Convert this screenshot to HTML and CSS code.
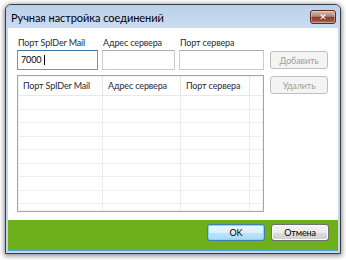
FILE: index.html
```html
<!DOCTYPE html>
<html>
<head>
<meta charset="utf-8">
<link rel="stylesheet" href="styles.css">
</head>
<body>
<div class="window">
  <div class="titlebar">
    <span class="title">Ручная настройка соединений</span>
    <div class="close"><span>✕</span></div>
  </div>
  <div class="client">
    <div class="content">
      <div class="left">
        <div class="fields">
          <div class="field f1">
            <div class="label">Порт SpIDer Mail</div>
            <div class="input focused">7000<span class="caret"></span></div>
          </div>
          <div class="field f2">
            <div class="label">Адрес сервера</div>
            <div class="input"></div>
          </div>
          <div class="field f3">
            <div class="label">Порт сервера</div>
            <div class="input"></div>
          </div>
        </div>
        <div class="table">
          <div class="row head">
            <div class="cell c1">Порт SpIDer Mail</div>
            <div class="cell c2">Адрес сервера</div>
            <div class="cell c3">Порт сервера</div>
            <div class="cell c4"></div>
          </div>
          <div class="row"><div class="cell c1"></div><div class="cell c2"></div><div class="cell c3"></div><div class="cell c4"></div></div>
          <div class="row"><div class="cell c1"></div><div class="cell c2"></div><div class="cell c3"></div><div class="cell c4"></div></div>
          <div class="row"><div class="cell c1"></div><div class="cell c2"></div><div class="cell c3"></div><div class="cell c4"></div></div>
          <div class="row"><div class="cell c1"></div><div class="cell c2"></div><div class="cell c3"></div><div class="cell c4"></div></div>
          <div class="row"><div class="cell c1"></div><div class="cell c2"></div><div class="cell c3"></div><div class="cell c4"></div></div>
          <div class="row"><div class="cell c1"></div><div class="cell c2"></div><div class="cell c3"></div><div class="cell c4"></div></div>
          <div class="row"><div class="cell c1"></div><div class="cell c2"></div><div class="cell c3"></div><div class="cell c4"></div></div>
          <div class="row"><div class="cell c1"></div><div class="cell c2"></div><div class="cell c3"></div><div class="cell c4"></div></div>
          <div class="row"><div class="cell c1"></div><div class="cell c2"></div><div class="cell c3"></div><div class="cell c4"></div></div>
        </div>
      </div>
      <div class="side">
        <div class="btn disabled add">Добавить</div>
        <div class="btn disabled del">Удалить</div>
      </div>
    </div>
    <div class="footer">
      <div class="btn ok">OK</div>
      <div class="btn cancel">Отмена</div>
    </div>
  </div>
</div>
</body>
</html>
```
FILE: styles.css
```css
html, body {
  margin: 0;
  padding: 0;
  background: #ffffff;
}
body {
  font-family: Lato, "Noto Sans", sans-serif;
  font-size: 9px;
  letter-spacing: -0.15px;
  width: 346px;
  height: 260px;
  overflow: hidden;
}
.window {
  box-sizing: border-box;
  margin: 4px 0 0 5px;
  width: 336px;
  height: 250px;
  border: 1px solid #3a3d42;
  border-radius: 6px 6px 0 0;
  background: #c3d6ec;
  box-shadow: 0 1px 5px 1px rgba(0, 0, 0, 0.45);
  display: flex;
  flex-direction: column;
  overflow: hidden;
}
.titlebar {
  height: 23px;
  flex: none;
  display: flex;
  align-items: center;
  justify-content: space-between;
  padding: 0 4px 0 5px;
  background: linear-gradient(#bad1ea, #cadcf1);
}
.title {
  font-size: 11px;
  letter-spacing: -0.05px;
  color: #000;
  margin-top: 1px;
}
.close {
  width: 26px;
  height: 14px;
  margin-top: 1px;
  box-sizing: border-box;
  border: 1px solid #5a2a20;
  border-radius: 3px;
  background: linear-gradient(#d9b8ad 0%, #b88271 45%, #8a3b29 50%, #9c4f3c 80%, #b97a66 100%);
  box-shadow: inset 0 0 0 1px rgba(255, 255, 255, 0.35);
  display: flex;
  align-items: center;
  justify-content: center;
}
.close span {
  color: #fff;
  font-size: 9px;
  font-weight: bold;
  line-height: 1;
  letter-spacing: 0;
  font-family: "DejaVu Sans", sans-serif;
}
.client {
  margin: 0 2px 2px 2px;
  flex: 1;
  background: #fff;
  display: flex;
  flex-direction: column;
  border-bottom: 1px solid #4aa3df;
}
.content {
  flex: 1;
  display: flex;
  padding: 8px 0 0 9px;
  gap: 5px;
}
.left {
  width: 248px;
  display: flex;
  flex-direction: column;
}
.fields {
  display: flex;
}
.field {
  display: flex;
  flex-direction: column;
}
.f1 { width: 81px; margin-right: 4px; }
.f2 { width: 73px; margin-right: 4px; }
.f3 { width: 85px; }
.label {
  height: 13px;
  line-height: 13px;
  padding-left: 1px;
  margin-bottom: 1px;
  color: #1e2b3c;
  white-space: nowrap;
}
.input {
  box-sizing: border-box;
  height: 20px;
  border: 1px solid #c8ccd2;
  border-top-color: #abadb3;
  background: #fff;
  line-height: 18px;
  padding-left: 3px;
  color: #000;
}
.input.focused {
  border-color: #5d9bd3;
  border-top-color: #3d7bad;
}
.caret {
  display: inline-block;
  width: 1px;
  height: 10px;
  margin-left: 3px;
  background: #000;
  vertical-align: -2px;
}
.table {
  margin-top: 5px;
  box-sizing: border-box;
  height: 137px;
  border: 1px solid #a3a6ac;
  box-shadow: inset 0 0 0 1px #f2f2f2;
  overflow: hidden;
  width: 247px;
}
.row {
  display: flex;
  box-sizing: border-box;
  height: 13.5px;
  border-bottom: 1px solid #eeeeee;
}
.row.head {
  height: 20px;
  border-bottom: 1px solid #e8e8e8;
}
.cell {
  box-sizing: border-box;
  border-right: 1px solid #ececec;
  height: 100%;
  white-space: nowrap;
  color: #1e2b3c;
}
.head .cell {
  line-height: 19px;
  padding-left: 5px;
  border-right-color: #e3e3e3;
}
.c1 { width: 85px; }
.c2 { width: 78px; }
.c3 { width: 69px; }
.c4 { flex: 1; border-right: none; }
.side {
  display: flex;
  flex-direction: column;
}
.btn {
  box-sizing: border-box;
  width: 58px;
  border-radius: 3px;
  display: flex;
  align-items: center;
  justify-content: center;
  white-space: nowrap;
}
.btn.disabled {
  height: 18px;
  border: 1px solid #bfbfbf;
  background: #f4f4f4;
  color: #a0a0a0;
}
.add { margin-top: 15px; }
.del { margin-top: 7px; }
.footer {
  height: 30px;
  flex: none;
  background: #6eaf1c;
  display: flex;
  justify-content: flex-end;
  align-items: flex-start;
  padding: 4px 9px 0 0;
  box-sizing: border-box;
  gap: 6px;
}
.ok, .cancel {
  height: 17px;
  color: #000;
}
.ok {
  border: 1px solid #3c7fb1;
  background: linear-gradient(#eaf6fd 0%, #d9f0fc 50%, #bee6fd 51%, #a7d9f5 100%);
  box-shadow: inset 0 0 0 1px #8fd2f6;
}
.cancel {
  border: 1px solid #707070;
  background: linear-gradient(#f2f2f2 0%, #ebebeb 50%, #dddddd 51%, #cfcfcf 100%);
  box-shadow: inset 0 0 0 1px #fcfcfc;
}
```
